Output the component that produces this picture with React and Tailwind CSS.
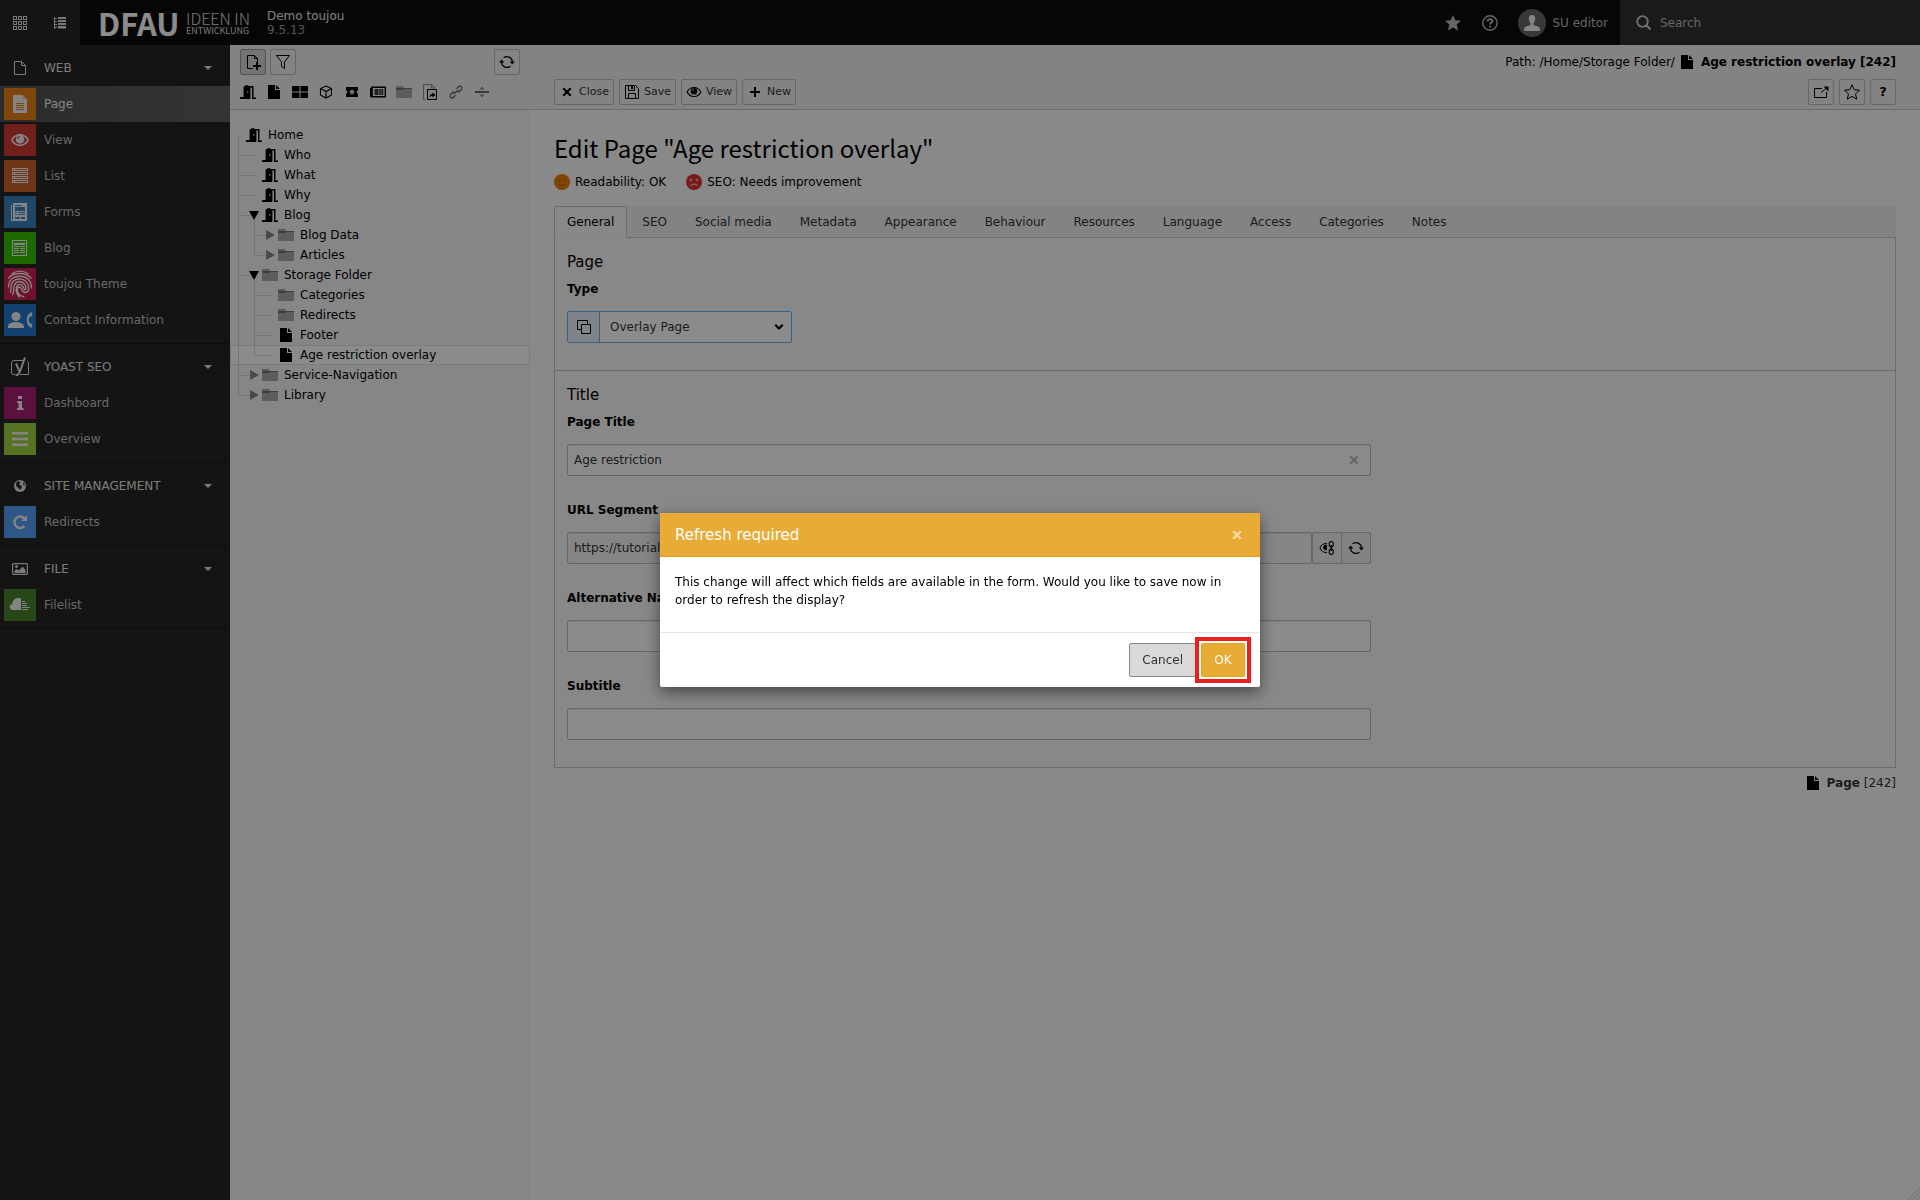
import React from "react";

const Svg = ({ s = 16, vb = 16, className = "", children }) => (
  <svg width={s} height={s} viewBox={`0 0 ${vb} ${vb}`} className={`shrink-0 ${className}`} fill="currentColor" aria-hidden="true">
    {children}
  </svg>
);
const Line = ({ s = 16, w = 1, className = "", children }) => (
  <svg width={s} height={s} viewBox="0 0 16 16" className={`shrink-0 ${className}`} fill="none" stroke="currentColor" strokeWidth={w} aria-hidden="true">
    {children}
  </svg>
);

const Door = () => (
  <Svg>
    <path fillRule="evenodd" d="M0 13h3.600V2.600L5 2V1.600L8.200 1v1L10.400 2v13H0zM7.300 7v2H8.200V7z" />
    <path d="M9.800 2h3.700v11.400H16V15h-4V3.500H9.800z" />
  </Svg>
);
const Doc = () => (
  <Svg>
    <path d="M2 1h7v5h5v9H2zM10 1l4 4h-4z" />
  </Svg>
);
const Folder = () => (
  <Svg>
    <path fill="#a8a8a8" d="M0 2h7l1 2h8v10H0z" />
    <path fill="#727272" d="M0 4h16v1H8L7 6H0z" />
  </Svg>
);
const Refresh = () => (
  <Svg>
    <path fill="none" stroke="currentColor" strokeWidth="1.200" d="M4.600 3.800A5.400 5.400 0 0 1 13.400 8M11.400 12.200A5.400 5.400 0 0 1 2.600 8" />
    <path d="M10.700 7.600h5.300l-2.700 3zM0 8.400h5.300l-2.700-3z" />
  </Svg>
);
const Eye = ({ s = 16 }) => (
  <Svg s={s}>
    <path fillRule="evenodd" d="M8 3C4.500 3 1.800 5 .5 8c1.300 3 4 5 7.500 5s6.200-2 7.500-5C14.200 5 11.500 3 8 3zm0 1.100c2.900 0 5 1.500 6.200 3.900-1.200 2.400-3.300 3.900-6.200 3.900S3 10.400 1.800 8C3 5.600 5.100 4.100 8 4.100z" />
    <circle cx="8" cy="7.300" r="3.300" />
    <circle cx="6.900" cy="6" r="1" fill="#fff" fillOpacity=".55" />
  </Svg>
);
const Caret = () => (
  <svg width="8" height="4" viewBox="0 0 8 4" fill="currentColor" aria-hidden="true">
    <path d="M0 0h8L4 4z" />
  </svg>
);
const Cross = ({ s = 16 }) => (
  <Line s={s} w={2.2}>
    <path d="M4.300 4.300l7.400 7.400M11.700 4.300l-7.400 7.400" />
  </Line>
);

const glyphs = {
  page: (
    <Svg vb={32} s={32}>
      <path d="M9 7h10v4h4v14H9z" />
      <path d="M19 7l4 4h-4z" opacity=".6" />
      <path d="M12 15.500h8M12 17.500h8M12 19.500h8M12 21.500h8" stroke="#e68019" />
    </Svg>
  ),
  view: (
    <Svg vb={32} s={32}>
      <path fillRule="evenodd" d="M16 10c-4 0-7.500 2.500-9 6 1.500 3.500 5 6 9 6s7.500-2.500 9-6c-1.500-3.500-5-6-9-6zm0 1.500c3.300 0 6 1.800 7.300 4.500-1.300 2.700-4 4.500-7.300 4.500S10 18.700 8.700 16c1.300-2.700 4-4.500 7.300-4.500z" />
      <circle cx="16" cy="15.200" r="4.300" />
      <path fill="none" stroke="#ce3a35" d="M13.500 15a2.500 2.500 0 0 1 2.500-2.500" />
    </Svg>
  ),
  list: (
    <Svg vb={32} s={32}>
      {[8, 12, 16, 20].map((y) => (
        <path key={y} fillRule="evenodd" d={`M8 ${y}h16v3H8zM11 ${y + 1}v1h12v-1zM9 ${y + 1}v1h1v-1z`} />
      ))}
    </Svg>
  ),
  forms: (
    <Svg vb={32} s={32}>
      <path d="M7 9h1v15h12v1H7zM9 7h14v18H9z" />
      <path fill="#3a84bd" d="M11 9h7v1h-7zM11 11h10v4H11zM11 16h2v1h-2zM14 16h7v1h-7zM11 18h2v1h-2zM14 18h7v1h-7zM11 21h5v2h-5zM17 21h4v2h-4z" />
    </Svg>
  ),
  blog: (
    <Svg vb={32} s={32}>
      <path fillRule="evenodd" d="M8 8h15v16H8zM9 9v14h13V9z" />
      <path d="M10 11h11v2H10zM10 14h5v1h-5zM16 14h5v1h-5zM10 16h5v1h-5zM16 16h5v1h-5zM10 18h5v1h-5zM16 18h5v1h-5zM10 20h5v1h-5zM16 20h5v1h-5z" />
    </Svg>
  ),
  finger: (
    <svg width="32" height="32" viewBox="0 0 32 32" fill="none" stroke="currentColor" strokeWidth="1.400" strokeLinecap="round" aria-hidden="true">
      <path d="M8 5.500c5-3 11-3 16 0M4.500 10C9 4.500 21 3.500 27 10M4.500 19C4.500 12 9 8.200 15.500 8.200 22.500 8.200 27.500 12.500 27.500 20M6.500 24C7 22 7 20 7.200 18 7.600 13.500 11 11 15.500 11c5.500 0 9.300 4 9.300 9 0 3-1.500 4.500-3.600 4.500-4.500 0-2.700-5.500-5.700-5.500-1.700 0-2.200 1.200-2.200 2.500 0 4 3 6.500 6.500 7.200M8.800 26.500c1-2.500 1.100-5 1.200-7.500.3-3.300 2.500-5.200 5.500-5.200 4 0 6.500 3 6.500 6.700 0 .9-.5 1.200-1.100 1.200-1.600 0-1-5.300-5.100-5.300-2.800 0-3.500 2.100-3.500 5 0 3 1.200 5.600 3.200 7.600" />
    </svg>
  ),
  contact: (
    <Svg vb={32} s={32}>
      <circle cx="12" cy="12.500" r="4.500" />
      <path d="M4 24v-1.500C4 19.500 8 18 12 18s8 1.500 8 4.500V24zM28.500 9.500l-1-1.200c-3 1-4.700 4.200-4.700 7.700s1.700 6.800 4.700 7.800l1-1.500-1.200-3-1.700.2c-.6-1-.8-2.200-.8-3.500s.2-2.500.8-3.500l1.700.2z" />
    </Svg>
  ),
  info: (
    <Svg vb={32} s={32}>
      <path d="M14 9h4v3h-4zM13 14h5v7h1.500v2h-6.500v-2h1.500v-5H13z" />
    </Svg>
  ),
  bars: (
    <Svg vb={32} s={32}>
      <path d="M8 9h16v2.500H8zM8 14.700h16v2.500H8zM8 20.500h16V23H8z" />
    </Svg>
  ),
  redo: (
    <Svg vb={32} s={32}>
      <path fill="none" stroke="currentColor" strokeWidth="2.400" d="M20.500 12.500A5.700 5.700 0 1 0 20.500 20" />
      <path d="M23 9v6h-6z" />
    </Svg>
  ),
  cloud: (
    <Svg vb={32} s={32}>
      <path d="M17 9.500V21h-4-4.500C6.500 21 5.800 19.500 5.800 18c0-1.500 1-2.700 2.500-3C8.500 11.500 11 9 14 9c1.200 0 2.200.2 3 .5zM18 12h3v1h-3zM18 14h5v1h-5zM18 16h5v1h-5zM18 18h8v1h-8zM18 20h6v1h-6z" />
    </Svg>
  ),
};

const modules = [
  {
    title: "WEB",
    icon: <Line><path d="M2.500 1.500h7l4 4v9h-11zM9.500 1.500v4h4" /></Line>,
    items: [
      ["Page", "bg-[#e68019]", "page"],
      ["View", "bg-[#ce3a35]", "view"],
      ["List", "bg-[#cb652a]", "list"],
      ["Forms", "bg-[#3a84bd]", "forms"],
      ["Blog", "bg-[#38bd00]", "blog"],
      ["toujou Theme", "bg-[#c9204f]", "finger"],
      ["Contact Information", "bg-[#2378cc]", "contact"],
    ],
  },
  {
    title: "YOAST SEO",
    icon: (
      <svg width="20" height="20" viewBox="0 0 20 20" fill="none" stroke="currentColor" className="shrink-0" aria-hidden="true">
        <path d="M14 3.500H4A2.500 2.500 0 0 0 1.500 6v10A2 2 0 0 0 3.500 17.500H5M10 17.500h8.500V6A2.500 2.500 0 0 0 17 4" />
        <path strokeWidth="2" d="M6 6.500l3.500 8M15 .5L10.500 13c-1 3-2 5.500-5 5.500" />
      </svg>
    ),
    items: [
      ["Dashboard", "bg-[#a71e70]", "info"],
      ["Overview", "bg-[#9ccf3e]", "bars"],
    ],
  },
  {
    title: "SITE MANAGEMENT",
    icon: (
      <Svg>
        <circle cx="8" cy="8" r="6" />
        <path fill="#262626" d="M4.500 4L7 3.200l1.500 1.300L7 6l.5 1 2 .8.5 1.700-2 2.500L6.500 10 4 8zM11 4.500l1.500 1 .3 2-1.500-.5z" />
      </Svg>
    ),
    items: [["Redirects", "bg-[#559df5]", "redo"]],
  },
  {
    title: "FILE",
    icon: (
      <Svg>
        <path fillRule="evenodd" d="M1 2h14l1 1v10l-1 1H1l-1-1V3zM1.200 3.200v9.600h13.600V3.200z" />
        <circle cx="4.500" cy="5.500" r="1.400" />
        <path d="M2.500 12V9.500L5 8l2 1.500L10.500 5.500 13.500 9v3z" />
      </Svg>
    ),
    items: [["Filelist", "bg-[#49822f]", "cloud"]],
  },
];

const tree = [
  ["Home", 0, "door"],
  ["Who", 1, "door"],
  ["What", 1, "door"],
  ["Why", 1, "door"],
  ["Blog", 1, "door", "open"],
  ["Blog Data", 2, "folder", "closed"],
  ["Articles", 2, "folder", "closed"],
  ["Storage Folder", 1, "folder", "open"],
  ["Categories", 2, "folder"],
  ["Redirects", 2, "folder"],
  ["Footer", 2, "doc"],
  ["Age restriction overlay", 2, "doc", null, true],
  ["Service-Navigation", 1, "folder", "closed"],
  ["Library", 1, "folder", "closed"],
];
const treeIcons = { door: <Door />, folder: <Folder />, doc: <Doc /> };
const indent = ["pl-0", "pl-4", "pl-8"];

const newPageTypes = [
  ["Standard", <Door />],
  ["Page", <Doc />],
  ["Grid", <Svg><path d="M0 2h7.500v5.500H0zM8.500 2H16v5.500H8.500zM0 8.500h7.500V14H0zM8.500 8.500H16V14H8.500z" /></Svg>],
  ["Product", <Line w={1.1}><path d="M8 2l5.500 2.500v6.500L8 14l-5.500-3V4.500zM2.500 4.500L8 7.500l5.500-3M8 7.500V14" /></Line>],
  ["Event", <Svg><path fillRule="evenodd" d="M2 3h12v3.500a1.500 1.500 0 0 0 0 3V13H2V9.500a1.500 1.500 0 0 0 0-3zM8 4.500L7 7H4.800l1.800 1.500L6 11l2-1.500 2 1.500-.6-2.500L11.200 7H9z" /></Svg>],
  ["News", <Svg><path fillRule="evenodd" d="M1 2.500h15v11H1L0 12.500V4h1zM2.800 4v8h11.800V4z" /><path d="M4.500 5h4v6h-4zM9.200 5h1.600v6H9.200zM11.300 5h2v6h-2z" opacity=".75" /></Svg>],
  ["Folder", <Folder />],
  ["Shortcut", <Svg><path fill="none" stroke="#8a8a8a" d="M3.500 15.500h-2V.5h8l3.500 3.500M9.500.5V4h3.500" /><path fill="none" stroke="currentColor" d="M5.500 5.500h9v10h-9z" /><path d="M7.500 13.500c0-2.500 1-3.500 3-3.500V8.200l3 2.700-3 2.700v-1.700c-1.300 0-2 .3-3 1.600z" /></Svg>],
  ["Link", <Line w={1.6} className="text-[#777]"><path d="M7.200 9.800L5.500 8.100a1.700 1.700 0 0 0-1 .5L2.500 10.700a2 2 0 0 0 2.800 2.800L7.500 11.300M8.800 6.200l1.700 1.700a1.700 1.700 0 0 0 1-.5l2-2.100a2 2 0 0 0-2.800-2.800L8.500 4.700M6 10l4-4" /></Line>],
  ["Divider", <Svg><path fill="#666" d="M1 7h14v2H1z" /><path fill="#888" d="M8 2.500L10.500 5.500h-5zM8 13.500l2.500-3h-5z" /></Svg>],
];

const tabs = ["General", "SEO", "Social media", "Metadata", "Appearance", "Behaviour", "Resources", "Language", "Access", "Categories", "Notes"];

const btn = "flex h-[26px] items-center justify-center rounded-[2px] border border-[#bbb] bg-[#eee]";
const field = "h-8 w-full rounded-[2px] border border-[#bbb] bg-[#fdfdfd] px-1.5 text-[#333] shadow-[inset_0_1px_1px_rgba(0,0,0,0.075)]";

function Topbar() {
  return (
    <header className="flex h-[45px] shrink-0 items-stretch bg-[#0c0c0c]">
      <div className="flex w-20 items-center bg-[#262626] text-[#ddd]">
        <button aria-label="Toggle module menu" className="flex w-10 justify-center">
          <Line>{[1.5, 6.5, 11.5].flatMap((y) => [1.5, 6.5, 11.5].map((x) => <rect key={`${x}-${y}`} x={x} y={y} width="3" height="3" />))}</Line>
        </button>
        <button aria-label="Toggle page tree" className="flex w-10 justify-center">
          <Svg>
            <path d="M2 2h1v12H2zM3 3h2v1H3zM3 6h2v1H3zM3 9h2v1H3zM3 12h2v1H3zM6 2h8v2H6zM6 5h8v2H6zM6 8h8v2H6zM6 11h8v2.500H6z" />
          </Svg>
        </button>
      </div>
      <div className="flex items-center pl-[18px] text-white">
        <div className="flex w-[152px] items-center justify-between font-['Noto_Sans_CJK_JP',sans-serif]">
          <span className="text-[31px] leading-[45px] font-bold">DFAU</span>
          <span className="flex flex-col whitespace-nowrap text-[#ddd]">
            <span className="text-[16px] leading-[16px] font-light">IDEEN IN</span>
            <span className="text-[9px] leading-[10px]">ENTWICKLUNG</span>
          </span>
        </div>
        <div className="pl-[17px] leading-[14px]">
          <div className="text-[#e6e6e6]">Demo toujou</div>
          <div className="text-[#999]">9.5.13</div>
        </div>
      </div>
      <div className="ml-auto flex items-center text-[#bbb]">
        <button aria-label="Bookmarks" className="flex w-[37px] justify-center">
          <Svg><path d="M8 0l2.300 5.300 5.700.5-4.300 3.800L13 15.500 8 12.500 3 15.500l1.300-5.900L0 5.800l5.700-.5z" /></Svg>
        </button>
        <button aria-label="Help" className="flex w-[37px] justify-center">
          <Line w={1.4}><circle cx="8" cy="8" r="7.200" /><path strokeWidth="1.900" d="M5.700 6.400c0-3 4.700-2.900 4.700-.3 0 1.600-2.300 1.600-2.300 3.400M8.100 10.700v1.700" /></Line>
        </button>
        <button className="flex items-center gap-1.5 pr-3 pl-2.5">
          <span className="flex size-7 items-center justify-center rounded-full bg-[#666] text-[#f0f0f0]">
            <Svg><path d="M8 0c2 0 3.200 1.400 3.200 3.600 0 2-.8 3.700-1.700 4.600v1.500c1 .9 5 1.500 6 2.800.5.700.5 2.500.5 3.500H0c0-1 0-2.800.5-3.500 1-1.300 5-1.900 6-2.800V8.200C5.600 7.300 4.800 5.600 4.800 3.600 4.800 1.400 6 0 8 0z" /></Svg>
          </span>
          SU editor
        </button>
        <label className="flex h-full w-[300px] items-center gap-2 bg-[#303030] pl-4 text-[#ccc]">
          <Line w={1.8}><circle cx="6.500" cy="6.500" r="5.300" /><path strokeWidth="2.200" d="M10.500 10.500l4 4" /></Line>
          <input type="search" placeholder="Search" aria-label="Search" className="min-w-0 flex-1 bg-transparent placeholder:text-[#bbb]" />
        </label>
      </div>
    </header>
  );
}

function ModuleMenu() {
  return (
    <nav className="w-[230px] shrink-0 bg-[#262626]">
      {modules.map((m) => (
        <section key={m.title} className="border-b border-[#181818] py-[5px]">
          <button className="flex h-9 w-full items-center pr-[18px] text-[#e0e0e0]">
            <span className="flex w-10 justify-center">{m.icon}</span>
            <span className="ml-1 flex-1 text-left">{m.title}</span>
            <Caret />
          </button>
          {m.items.map(([name, color, glyph], i) => {
            const active = m.title === "WEB" && i === 0;
            return (
              <a key={name} href="#" className={`flex h-9 items-center gap-2 pl-1 ${active ? "bg-linear-to-r from-[#505050] to-[#606060] text-[#f0f0f0]" : "text-[#bdbdbd]"}`}>
                <span className={`flex size-8 items-center justify-center text-[#f0f0f0] ${color}`}>{glyphs[glyph]}</span>
                {name}
              </a>
            );
          })}
        </section>
      ))}
    </nav>
  );
}

function PageTree() {
  return (
    <aside className="flex w-[300px] shrink-0 flex-col bg-[#f5f5f5]">
      <div className="h-[65px] border-b border-[#c3c3c3] bg-[#eee] pt-1">
        <div className="flex gap-1 px-2.5">
          <button aria-label="Create new pages" className={`${btn} w-[26px] border-[#999]! bg-[#d4d4d4]!`}>
            <Svg><path fill="none" stroke="currentColor" d="M8 14.500H2.500v-13h7l3 3V8M9.500 1.500v3h3" /><path d="M11 8h2v3h3v2h-3v3h-2v-3H8v-2h3z" /></Svg>
          </button>
          <button aria-label="Filter tree" className={`${btn} w-[26px]`}>
            <Line><path d="M1.500 1.500h13l-5 6.500v6.500l-3-2V8z" /></Line>
          </button>
          <button aria-label="Refresh tree" className={`${btn} ml-auto w-[26px]`}><Refresh /></button>
        </div>
        <div className="flex h-[34px] items-center pl-[5px]">
          {newPageTypes.map(([name, icon]) => (
            <button key={name} aria-label={name} className="flex w-[26px] justify-center">{icon}</button>
          ))}
        </div>
      </div>
      <div className="relative pt-[15px]">
        <svg width="60" height="295" viewBox="0 0 60 295" className="absolute top-0 left-0 z-10" fill="none" stroke="#d4d4d4" aria-hidden="true">
          <path d="M8.500 25v260.500H20M8.500 45.500H26M8.500 65.500H26M8.500 85.500H26M8.500 105.500H20M8.500 165.500H20M8.500 265.500H20M24.500 110v35.500H36M24.500 125.500H36M24.500 170v75.500H42M24.500 185.500H42M24.500 205.500H42M24.500 225.500H42" />
        </svg>
        <ul>
          {tree.map(([name, depth, icon, toggle, active]) => (
            <li key={name + depth} className={active ? "bg-[#fdfdfd] shadow-[inset_0_0_0_1px_#e2e2e2]" : ""}>
              <div className={`flex h-5 items-center ${indent[depth]}`}>
                <span className="flex w-4 justify-center">
                  {toggle === "open" && <svg width="10" height="9" viewBox="0 0 10 9" aria-hidden="true"><path d="M0 0h10L5 9z" /></svg>}
                  {toggle === "closed" && <svg width="9" height="10" viewBox="0 0 9 10" fill="#888" aria-hidden="true"><path d="M0 0v10l9-5z" /></svg>}
                </span>
                <a href="#" className="flex items-center gap-1.5">{treeIcons[icon]}{name}</a>
              </div>
            </li>
          ))}
        </ul>
      </div>
    </aside>
  );
}

const Face = ({ color, children }) => (
  <svg width="16" height="16" viewBox="0 0 16 16" className="shrink-0" fill="none" aria-hidden="true">
    <circle cx="8" cy="8" r="8" fill={color} />
    {children}
  </svg>
);

function DocHeader() {
  return (
    <div className="flex h-[65px] shrink-0 flex-col justify-between border-b border-[#c3c3c3] bg-[#eee] px-6 pt-2 pb-1">
      <div className="flex items-center justify-end leading-[18px]">
        Path: /Home/Storage Folder/
        <span className="mr-1.5 ml-1"><Doc /></span>
        <strong>Age restriction overlay [242]</strong>
      </div>
      <div className="flex gap-[5px] text-[11px] text-[#333]">
        <button className={`${btn} gap-1 px-1`}><span className="text-black"><Cross /></span>Close</button>
        <button className={`${btn} gap-1 px-1`}>
          <Line className="text-black"><path d="M1.500 1.500h10l3 3v10h-13zM4.500 14V9.500h7V14M4.500 2v4.500h6V2" /><path strokeWidth="2" d="M8 2v3" /></Line>
          Save
        </button>
        <button className={`${btn} gap-1 px-1`}><span className="text-black"><Eye /></span>View</button>
        <button className={`${btn} gap-1 px-1`}><Line w={2} className="text-black"><path d="M8 3v10M3 8h10" /></Line>New</button>
        <button aria-label="Open in new window" className={`${btn} ml-auto w-[26px] text-black`}>
          <Svg><path fill="none" stroke="currentColor" d="M9 4.500H1.500v9h12V8M8 8.500l5-4" /><path d="M10.500 2.500H15.500v5z" /></Svg>
        </button>
        <button aria-label="Bookmark" className={`${btn} w-[26px] text-black`}>
          <Line><path d="M8 .8l2.200 4.900 5.300.5-4 3.600 1.200 5.400L8 12.400l-4.700 2.800 1.200-5.400-4-3.600 5.300-.5z" /></Line>
        </button>
        <button aria-label="Help" className={`${btn} w-[26px] text-[13px] font-bold text-black`}>?</button>
      </div>
    </div>
  );
}

function Field({ id, label, children }) {
  return (
    <div className="pb-[25px] last:pb-0">
      <label htmlFor={id} className="block pb-[13px] leading-[18px] font-bold">{label}</label>
      {children}
    </div>
  );
}

function EditForm() {
  return (
    <form className="px-6 pt-[23px] pb-6">
      <h1 className="font-['Noto_Sans_CJK_JP',sans-serif] text-[24px] leading-[30px]">Edit Page "Age restriction overlay"</h1>
      <div className="flex gap-5 pt-2.5 pb-[15px] leading-[18px]">
        <span className="flex items-center gap-[5px]">
          <Face color="#ee7c00"><path fill="#555" d="M4.500 6h1.500v1.200H4.500zM10 6h1.500v1.200H10z" /><path stroke="#a07a40" strokeWidth="1.500" d="M5 11.200h6" /></Face>
          Readability: OK
        </span>
        <span className="flex items-center gap-[5px]">
          <Face color="#dc3232"><path stroke="#f6b0a8" strokeWidth="1.200" d="M4 5l2 2M6 5L4 7M10 5l2 2M12 5l-2 2M4.500 12c1.500-2.600 5.500-2.600 7 0" /></Face>
          SEO: Needs improvement
        </span>
      </div>
      <div role="tablist" className="flex h-8 gap-0.5 rounded-t-[2px] bg-[#eee] shadow-[inset_0_-1px_0_#c3c3c3]">
        {tabs.map((t, i) => (
          <button
            key={t}
            type="button"
            role="tab"
            aria-selected={i === 0}
            className={`rounded-t-[2px] border px-3 ${i === 0 ? "border-[#c3c3c3] border-b-[#f5f5f5] bg-[#f8f8f8] text-black" : "border-transparent text-[#333]"}`}
          >
            {t}
          </button>
        ))}
      </div>
      <div className="border border-t-0 border-[#c3c3c3] bg-[#f7f7f7]">
        <fieldset className="px-3 pt-[15px] pb-[27px]">
          <legend className="float-left w-full text-[15px] leading-[18px]">Page</legend>
          <div className="clear-both pt-[9px]">
            <Field id="type" label="Type">
              <div className="flex h-8 w-[225px] rounded-[2px] border border-[#66afe9] bg-[#fdfdfd]">
                <span className="flex w-8 items-center justify-center border-r border-[#66afe9] bg-[#e8f0fd]">
                  <Line><path d="M5 10.500H1.500v-9h10V5M5.500 5.500h9v9h-9z" /></Line>
                </span>
                <span className="relative flex flex-1">
                  <select id="type" className="w-full appearance-none bg-transparent pl-2.5 text-[#333]">
                    <option>Overlay Page</option>
                  </select>
                  <Line s={12} w={2.8} className="pointer-events-none absolute top-[9px] right-1.5"><path d="M3 5l5 5 5-5" /></Line>
                </span>
              </div>
            </Field>
          </div>
        </fieldset>
        <fieldset className="border-t border-[#c3c3c3] px-3 pt-[15px] pb-[27px]">
          <legend className="float-left w-full text-[15px] leading-[18px]">Title</legend>
          <div className="clear-both max-w-[804px] pt-[9px]">
            <Field id="title" label="Page Title">
              <div className="relative">
                <input id="title" defaultValue="Age restriction" className={field} />
                <button type="button" aria-label="Clear title" className="absolute top-2 right-[9px] text-[#bbb]"><Cross /></button>
              </div>
            </Field>
            <Field id="slug" label="URL Segment">
              <div className="flex">
                <input id="slug" defaultValue="https://tutorial.toujou.de/age-restriction" className={`${field} min-w-0 flex-1 bg-[#f3f3f3]!`} />
                <button type="button" aria-label="Toggle manual URL segment" className={`${btn} h-8! w-[30px] shrink-0`}>
                  <Svg>
                    <path fill="none" stroke="currentColor" d="M8 3.500C4.500 3.200 2 5 1 8c1 3 3.500 4.800 7 4.500" />
                    <path d="M8 4.800a2.800 2.800 0 1 0 0 5.200z" />
                    <path fill="none" stroke="currentColor" strokeWidth="1.100" d="M11.500 1.500h1.500l1.200 1.200v3L13 6.900h-1.500l-1.200-1.200v-3zM11.500 9.100h1.500l1.200 1.200v3L13 14.500h-1.500l-1.200-1.200v-3zM12.200 5v6" />
                  </Svg>
                </button>
                <button type="button" aria-label="Recalculate URL segment" className={`${btn} -ml-px h-8! w-[30px] shrink-0`}><Refresh /></button>
              </div>
            </Field>
            <Field id="alt" label="Alternative Navigation Title"><input id="alt" className={field} /></Field>
            <Field id="sub" label="Subtitle"><input id="sub" className={field} /></Field>
          </div>
        </fieldset>
      </div>
      <div className="flex items-center justify-end gap-1.5 pt-1.5 leading-[18px] text-[#333]">
        <span className="text-black"><Doc /></span>
        <span><strong>Page</strong> [242]</span>
      </div>
    </form>
  );
}

function RefreshDialog() {
  return (
    <div className="fixed inset-0 z-20 flex items-center justify-center bg-black/45">
      <div role="dialog" aria-modal="true" aria-labelledby="dlg-title" className="w-[600px] rounded-[2px] bg-white shadow-[0_5px_15px_rgba(0,0,0,0.5)]">
        <div className="flex h-11 items-center justify-between border-b border-[#e8a010] bg-[#e8ab36] px-[15px] text-white">
          <h2 id="dlg-title" className="text-[15px] leading-[18px]">Refresh required</h2>
          <button aria-label="Close dialog" className="text-[#f7deae]"><Cross /></button>
        </div>
        <p className="px-[15px] pt-4 pb-[23px] leading-[18px]">
          This change will affect which fields are available in the form. Would you like to save now in order to refresh the display?
        </p>
        <div className="flex justify-end gap-[5px] border-t border-[#e5e5e5] px-[15px] py-2.5">
          <button className="h-[34px] rounded-[2px] border border-[#888] bg-[#d9d9d9] px-3 text-[#333]">Cancel</button>
          <div className="relative">
            <button className="h-[34px] w-11 rounded-[2px] border border-[#e8a010] bg-[#e8ab36] text-white">OK</button>
            <span className="pointer-events-none absolute -inset-1.5 border-4 border-[#e8201f]" />
          </div>
        </div>
      </div>
    </div>
  );
}

export default function App() {
  return (
    <div className="flex min-h-screen flex-col bg-[#fafafa] font-['Verdana','DejaVu_Sans',sans-serif] text-[12px] leading-[18px] text-black">
      <Topbar />
      <div className="flex flex-1">
        <ModuleMenu />
        <PageTree />
        <main className="flex min-w-0 flex-1 flex-col">
          <DocHeader />
          <EditForm />
          <Line s={12} className="mt-auto ml-auto text-[#ddd]"><path strokeWidth="2" d="M0 16L16 0M6 16L16 6M12 16l4-4" /></Line>
        </main>
      </div>
      <RefreshDialog />
    </div>
  );
}
